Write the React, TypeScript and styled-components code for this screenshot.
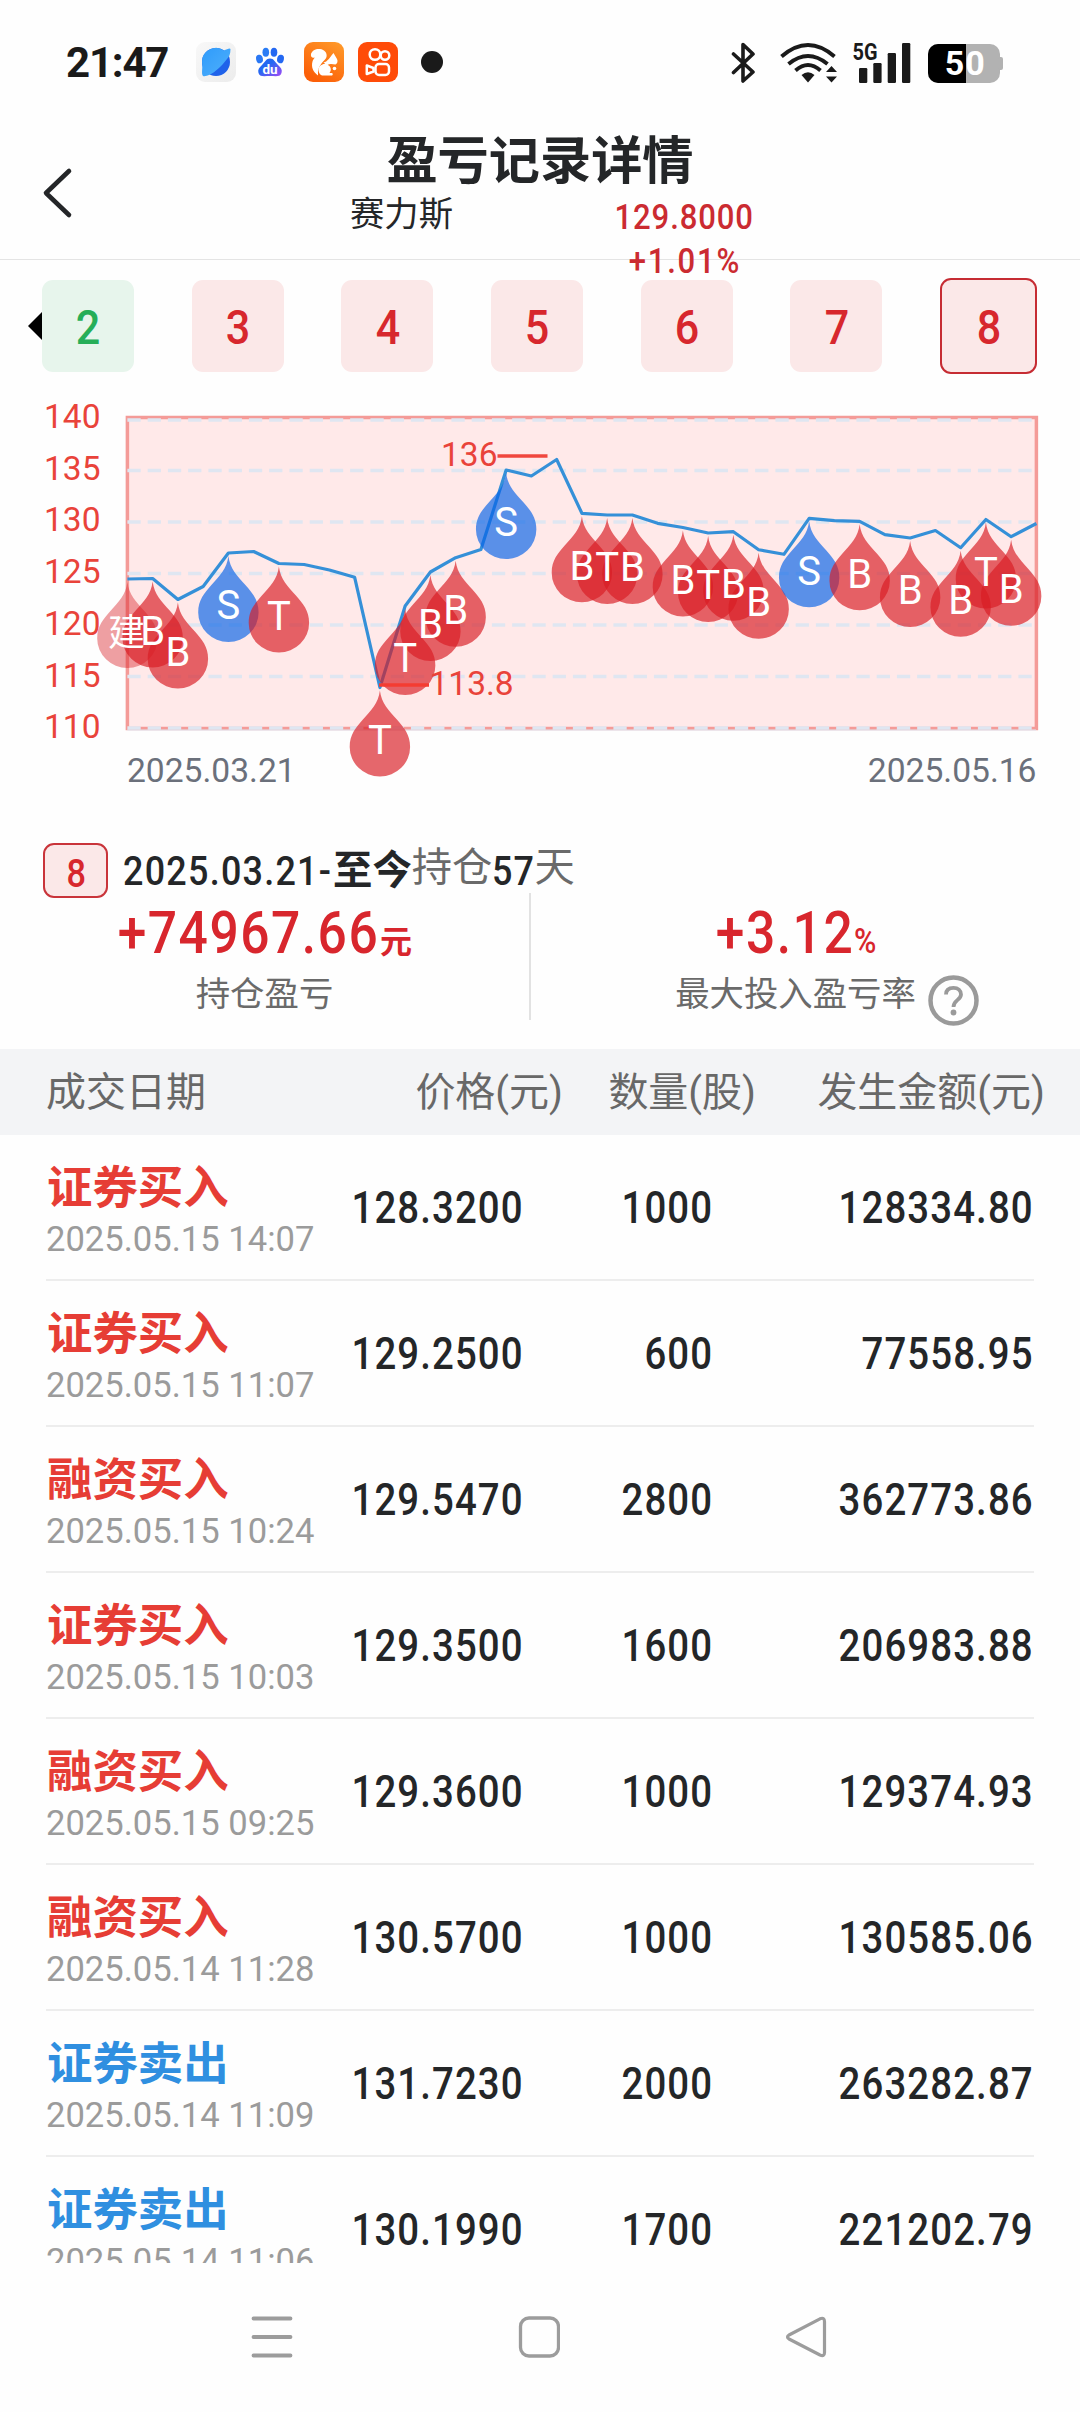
import React from 'react';
import styled, { createGlobalStyle } from 'styled-components';

const SANS = `Roboto, "Noto Sans CJK SC", sans-serif`;

const GlobalStyle = createGlobalStyle`
  * { box-sizing: border-box; }
  body { margin: 0; background: #fefefe; font-family: ${SANS}; color: #242628; }
  svg { display: block; flex: none; }
`;

type Side = 'buy' | 'sell';

const Screen = styled.div`
  width: 1080px;
  height: 2412px;
  display: flex;
  flex-direction: column;
  overflow: hidden;
  background: #fefefe;
`;

/* Narrow DIN-like numerals */
const Num = styled.span<{ $size: number; $lh: number; $origin?: string; $width?: number; $trim?: number; $spacing?: number }>`
  display: inline-block;
  white-space: nowrap;
  width: ${p => (p.$width ? `${p.$width}px` : 'auto')};
  margin-left: -${p => p.$trim ?? 0}px;
  font-size: ${p => p.$size}px;
  line-height: ${p => p.$lh}px;
  font-weight: 500;
  letter-spacing: ${p => p.$spacing ?? 0.029}em;
  transform: scaleX(0.88);
  transform-origin: ${p => p.$origin ?? 'center'} center;
`;

/* ---------- status bar ---------- */

const StatusBar = styled.div`
  height: 100px;
  flex: none;
  display: flex;
  justify-content: space-between;
  padding: 42px 77px 0 66px;
`;

const StatusGroup = styled.div`
  display: flex;
  gap: 14px;
`;

const Clock = styled.div`
  width: 116px;
  font-size: 42px;
  line-height: 42px;
  font-weight: 700;
  letter-spacing: -1.2px;
  color: #1a1a1a;
`;

const MoreDot = styled.div`
  width: 22px;
  height: 22px;
  margin: 9px 0 0 9px;
  border-radius: 50%;
  background: #1a1a1a;
`;

const BrowserIcon = () => (
  <svg width="40" height="40" viewBox="0 0 40 40">
    <defs>
      <linearGradient id="tile" x1="0" y1="0" x2="1" y2="1">
        <stop offset="0" stopColor="#f8f8f8" />
        <stop offset="1" stopColor="#ececec" />
      </linearGradient>
      <linearGradient id="planet" x1="0" y1="0" x2="1" y2="1">
        <stop offset="0" stopColor="#2f9bfb" />
        <stop offset="1" stopColor="#4fb0fb" />
      </linearGradient>
    </defs>
    <rect width="40" height="40" rx="9" fill="url(#tile)" />
    <circle cx="20" cy="20" r="14" fill="#1f62ea" />
    <path d="M7 34C5 32 7 26 6 20A14 14 0 0 1 28 8.500C31 7 34 5.500 34.500 7C34.500 12 33 15 31 17C25 25 19 30 14 32.500C11 34 8.500 34.500 7 34Z" fill="url(#planet)" />
  </svg>
);

const BaiduIcon = () => (
  <svg width="40" height="40" viewBox="0 0 40 40">
    <defs>
      <linearGradient id="paw" x1="0" y1="0" x2="1" y2="1">
        <stop offset="0.4" stopColor="#2468f2" />
        <stop offset="1" stopColor="#a04bf5" />
      </linearGradient>
    </defs>
    <ellipse cx="9.500" cy="17" rx="3.400" ry="4.300" fill="#2a78f4" transform="rotate(-12 9.500 17)" />
    <ellipse cx="15.800" cy="10.300" rx="3.300" ry="4.500" fill="#2a7cf5" />
    <ellipse cx="24" cy="10.300" rx="3.300" ry="4.500" fill="#2468f2" />
    <ellipse cx="30.500" cy="17" rx="3.400" ry="4.300" fill="#2468f2" transform="rotate(12 30.500 17)" />
    <path d="M20 16.500C24 16.500 25 20 28 23C31 25.500 32.500 28 31.500 31C30 35.500 25 34 20 34C15 34 10 35.500 8.500 31C7.500 28 9 25.500 12 23C15 20 16 16.500 20 16.500Z" fill="url(#paw)" />
    <text x="20" y="31.500" textAnchor="middle" fontFamily="Roboto, sans-serif" fontWeight="700" fontSize="13.500" fill="#fff">du</text>
  </svg>
);

const SquirrelIcon = () => (
  <svg width="40" height="40" viewBox="0 0 40 40">
    <defs>
      <linearGradient id="uc" x1="1" y1="0" x2="0.400" y2="1">
        <stop offset="0" stopColor="#ff9c2b" />
        <stop offset="1" stopColor="#fb5f08" />
      </linearGradient>
    </defs>
    <rect width="40" height="40" rx="9" fill="url(#uc)" />
    <path d="M14 33.500C9 30 7 25 8.500 19.500C9 17.500 10 16.500 11 15.500C8 16.500 6.500 14.500 7 12C8 8.500 12 6.500 16 7C20.500 7.500 23.500 11 22.500 15C21.500 19 13 22 14 33.500Z" fill="#fff" />
    <path d="M29.500 11L33 17C34 19 33.500 21.500 31.500 22.500L27 22C24 22 23 23.500 23 23.500L19.500 20.500C24 19.500 26 15 29.500 11Z" fill="#fff" />
    <path d="M14.500 27.500C15 23.500 19 21 23 22.500C27 24 28 28 25.500 31H28C29 31 29 33.500 28 33.500H18C16 33 14.500 30.500 14.500 27.500Z" fill="#fff" />
    <circle cx="30.500" cy="26.500" r="1.800" fill="#fff" />
  </svg>
);

const CameraIcon = () => (
  <svg width="40" height="40" viewBox="0 0 40 40">
    <rect width="40" height="40" rx="9" fill="#ff4b08" />
    <g fill="none" stroke="#fff" strokeWidth="2.500">
      <circle cx="17" cy="12.500" r="5.300" />
      <circle cx="27" cy="13.500" r="4.300" />
      <rect x="17.500" y="22" width="13.500" height="11" rx="3.500" />
      <path d="M8.800 23.500V32L15.500 29.500V26Z" strokeLinejoin="round" />
    </g>
  </svg>
);

const SystemIconsSvg = styled.svg`
  margin-top: -8px;
`;

const SystemIcons = () => (
  <SystemIconsSvg width="272" height="50" viewBox="731 33 272 50">
    <path d="M733.500 53L753 71L743 80V43.500L753 53L733.500 71.500" fill="none" stroke="#1a1a1a" strokeWidth="3.600" strokeLinejoin="round" strokeLinecap="round" />
    <g fill="none" stroke="#1a1a1a" strokeWidth="3.900">
      <path d="M781.500 55.500Q808 32.500 834.500 55.500" />
      <path d="M788.500 63Q808 47 827.500 63" />
      <path d="M795.500 69.500Q808 58.500 820.500 69.500" />
    </g>
    <path d="M801.500 74Q808 68.500 814.500 74L808 81.500Z" fill="#1a1a1a" />
    <path d="M826 71L831.500 65L837 71ZM826 75.500H837L831.500 81.500Z" fill="#1a1a1a" />
    <text transform="translate(852.500 58.500) scale(.83 1)" fontFamily="Roboto, sans-serif" fontWeight="700" fontSize="24" fill="#1a1a1a">5G</text>
    <g fill="#1a1a1a">
      <rect x="859" y="67" width="8.300" height="15" rx="1.200" />
      <rect x="873.300" y="62" width="8.300" height="20" rx="1.200" />
      <rect x="887.700" y="52" width="8.300" height="30" rx="1.200" />
      <rect x="902" y="42" width="8.300" height="40" rx="1.200" />
    </g>
    <rect x="928" y="43" width="72" height="39" rx="10" fill="#b2b2b2" />
    <rect x="998" y="56" width="5" height="13" rx="2" fill="#b2b2b2" />
    <path d="M966 43V82H938A10 10 0 0 1 928 72V53A10 10 0 0 1 938 43Z" fill="#000" />
    <text x="965.300" y="74.300" textAnchor="middle" fontFamily="Roboto, sans-serif" fontWeight="700" fontSize="34" letterSpacing="1" fill="#fff">50</text>
  </SystemIconsSvg>
);

/* ---------- header ---------- */

const Header = styled.header`
  height: 160px;
  flex: none;
  display: flex;
  border-bottom: 1px solid #e4e4e4;
`;

const Back = styled.div`
  width: 100px;
  padding: 67px 0 0 41px;
`;

const Heading = styled.div`
  flex: 1;
  padding: 32px 100px 0 0;
  display: flex;
  flex-direction: column;
  align-items: center;
`;

const Title = styled.h1`
  margin: 0;
  font-size: 51.200px;
  line-height: 60px;
  font-weight: 700;
`;

const SubRow = styled.div`
  display: grid;
  grid-template-columns: 283px 283px;
  margin-left: 6px;
  height: 60px;
  justify-items: center;
`;

const StockName = styled.div`
  font-size: 34.300px;
  line-height: 44px;
`;

const Quote = styled.div`
  margin-top: 3px;
  display: flex;
  flex-direction: column;
  align-items: center;
  color: #cb2b31;
`;

/* ---------- tabs ---------- */

const TabBar = styled.div`
  height: 114px;
  flex: none;
  display: flex;
  align-items: center;
  padding: 18px 43px 0 28px;
`;

const ScrollArrow = styled.div`
  width: 0;
  height: 0;
  border: 14px solid transparent;
  border-left: 0;
  border-right-color: #000;
`;

const Tabs = styled.div`
  flex: 1;
  display: flex;
  align-items: center;
  justify-content: space-between;
`;

const Tab = styled.div<{ $gain: boolean; $active: boolean }>`
  width: ${p => (p.$active ? 97 : 92)}px;
  height: ${p => (p.$active ? 96 : 92)}px;
  border-radius: 11px;
  border: ${p => (p.$active ? '2px solid #c62c33' : '0')};
  background: ${p => (p.$gain ? '#fbe8e8' : '#e7f5ec')};
  color: ${p => (p.$gain ? '#d7272d' : '#26ae58')};
  display: flex;
  align-items: center;
  justify-content: center;
  padding: 4px 0 0 2px;
`;

/* ---------- chart ---------- */

const LEFT = 127.4;
const STEP = 25.25;
const TOP = 419;
const PX_PER_UNIT = 10.3;

const linePoints = [
  579, 578.5, 599.5, 586.5, 553, 551.5, 563.5, 564.5, 570, 577.3, 687.5, 606, 572, 557.7, 549.5, 470, 476, 459.5, 513.3,
  515, 515, 523.3, 527.5, 533, 531.7, 549.7, 554.3, 518.3, 520.7, 521.3, 534.7, 538, 530.5, 547.7, 519.5, 536.7, 523.5,
];

const markers: [number, string][] = [
  [0, '建'], [1, 'B'], [2, 'B'], [4, 'S'], [6, 'T'], [10, 'T'], [11, 'T'], [12, 'B'], [13, 'B'], [15, 'S'], [18, 'B'], [19, 'T'],
  [20, 'B'], [22, 'B'], [23, 'T'], [24, 'B'], [25, 'B'], [27, 'S'], [29, 'B'], [31, 'B'], [33, 'B'], [34, 'T'], [35, 'B'],
];

const markerFill = (label: string) =>
  label === 'S' ? 'rgba(9,100,231,.67)' : label === '建' ? 'rgba(216,28,36,.42)' : 'rgba(216,28,36,.67)';

const xAt = (i: number) => LEFT + i * STEP;

const DROP = 'M0 0C1.500 13 9 20 17 29C24 37 30.200 44 30.200 56.500A30.200 29.500 0 0 1 -30.200 56.500C-30.200 44 -24 37 -17 29C-9 20 -1.500 13 0 0Z';

const Chart = () => (
  <svg width="1080" height="446" viewBox="0 374 1080 446" fontFamily={SANS} fontSize="33.500">
    <rect x={LEFT} y="417.500" width="909" height="311" fill="#ffe9e9" stroke="#f49b98" strokeWidth="3.500" />
    {[140, 135, 130, 125, 120, 115, 110].map((v, i) => {
      const y = TOP + i * 5 * PX_PER_UNIT + (i === 0 ? 1 : 0);
      return (
        <g key={v}>
          <line x1={LEFT} x2="1034" y1={y} y2={y} stroke="#dfe6f1" strokeWidth="3.300" strokeDasharray="13.300 6.950" />
          <text x="100.500" y={428 + i * 51.7} textAnchor="end" fill="#e9433a">{v}</text>
        </g>
      );
    })}
    <line x1={LEFT} x2="1036" y1="730" y2="730" stroke="#dfe6f1" strokeWidth="1" />
    <polyline points={linePoints.map((y, i) => `${xAt(i)},${y}`).join(' ')} fill="none" stroke="#3590d8" strokeWidth="3.200" strokeLinejoin="round" />
    {markers.map(([i, label]) => (
      <path key={i} d={DROP} transform={`translate(${xAt(i)} ${linePoints[i] + 3})`} fill={markerFill(label)} />
    ))}
    <path d="M379 685H429" stroke="#f43c32" strokeWidth="3.300" />
    <path d="M497.500 456H547.500" stroke="#f0473e" strokeWidth="3.500" />
    <text x="497.500" y="466" textAnchor="end" fill="#e9433a">136</text>
    <text x="429.500" y="694.500" fill="#e9433a">113.8</text>
    {markers.map(([i, label]) => (
      <text key={i} x={xAt(i) - (label === '建' ? 1 : 0)} y={linePoints[i] + (label === '建' ? 67 : 66.2)} textAnchor="middle" fontSize={label === '建' ? 37 : 40} fill="#fff">
        {label}
      </text>
    ))}
    <g fill="#6b707b" fontSize="33.600">
      <text x="127" y="782">2025.03.21</text>
      <text x="1036.500" y="782" textAnchor="end">2025.05.16</text>
    </g>
  </svg>
);

/* ---------- holding summary ---------- */

const Period = styled.div`
  height: 73px;
  flex: none;
  display: flex;
  align-items: flex-start;
  padding: 23px 0 0 43px;
`;

const PeriodBadge = styled.div`
  width: 65px;
  height: 55px;
  margin-right: 15px;
  border: 2px solid #c9343a;
  border-radius: 11px;
  background: #fbe8e8;
  color: #d7272d;
  display: flex;
  justify-content: center;
  padding: 2px 0 0 2px;
`;

const PeriodWord = styled.span<{ $strong?: boolean }>`
  font-size: ${p => (p.$strong ? 39.4 : 40.3)}px;
  line-height: 60px;
  font-weight: ${p => (p.$strong ? 700 : 400)};
  color: ${p => (p.$strong ? '#242628' : '#6a6a6a')};
  margin-top: ${p => (p.$strong ? -2 : -5)}px;
`;

const PeriodNum = styled.span`
  margin-top: -2px;
`;

const Stats = styled.div`
  height: 156px;
  flex: none;
  display: flex;
  padding-right: 20px;
`;

const Stat = styled.div`
  flex: 1;
  display: flex;
  flex-direction: column;
  align-items: center;
  padding-top: 8px;
`;

const Divider = styled.div`
  width: 2px;
  height: 127px;
  background: #e2e2e2;
`;

const StatValue = styled.div`
  display: flex;
  align-items: baseline;
  height: 64px;
  color: #d8262d;
`;

const Unit = styled.span`
  font-size: 32px;
  font-weight: 700;
  line-height: 64px;
  margin-left: 1px;
`;

const StatLabel = styled.div`
  display: flex;
  align-items: flex-start;
  margin-top: 7px;
  font-size: 34.400px;
  line-height: 44px;
  color: #6a6a6a;
`;

const Help = styled.span`
  margin: 3px -63px 0 12px;
`;

/* ---------- trades table ---------- */

const TableHead = styled.div`
  height: 86px;
  flex: none;
  display: grid;
  grid-template-columns: 517px 193px 289px;
  padding: 1px 0 0 46px;
  background: #f3f4f6;
  font-size: 40px;
  line-height: 86px;
  color: #686868;
`;

const HeadCell = styled.div`
  display: flex;
  justify-content: space-between;
  &:not(:first-child) { justify-content: flex-end; }
`;

const TradeList = styled.div`
  flex: 1;
  min-height: 0;
  overflow: hidden;
  padding: 0 46px;
`;

const TradeRow = styled.div`
  height: 146px;
  display: grid;
  grid-template-columns: 269px 209px 189px 1fr;
  border-bottom: 2px solid #ededed;
`;

const TradeInfo = styled.div`
  padding-top: 27px;
  white-space: nowrap;
`;

const TradeType = styled.div<{ $side: Side }>`
  padding-left: 1px;
  font-size: 45.400px;
  line-height: 54px;
  font-weight: 700;
  color: ${p => (p.$side === 'buy' ? '#e63d35' : '#2f8fe0')};
`;

const TradeTime = styled.div`
  margin-top: 1px;
  font-size: 34.600px;
  line-height: 44px;
  color: #9b9b9b;
`;

const TradeCell = styled.div`
  padding-top: 44px;
  text-align: right;
`;

const trades: { type: string; side: Side; time: string; price: string; qty: string; amount: string }[] = [
  { type: '证券买入', side: 'buy', time: '2025.05.15 14:07', price: '128.3200', qty: '1000', amount: '128334.80' },
  { type: '证券买入', side: 'buy', time: '2025.05.15 11:07', price: '129.2500', qty: '600', amount: '77558.95' },
  { type: '融资买入', side: 'buy', time: '2025.05.15 10:24', price: '129.5470', qty: '2800', amount: '362773.86' },
  { type: '证券买入', side: 'buy', time: '2025.05.15 10:03', price: '129.3500', qty: '1600', amount: '206983.88' },
  { type: '融资买入', side: 'buy', time: '2025.05.15 09:25', price: '129.3600', qty: '1000', amount: '129374.93' },
  { type: '融资买入', side: 'buy', time: '2025.05.14 11:28', price: '130.5700', qty: '1000', amount: '130585.06' },
  { type: '证券卖出', side: 'sell', time: '2025.05.14 11:09', price: '131.7230', qty: '2000', amount: '263282.87' },
  { type: '证券卖出', side: 'sell', time: '2025.05.14 11:06', price: '130.1990', qty: '1700', amount: '221202.79' },
];

/* ---------- system navigation ---------- */

const NavBar = styled.nav`
  height: 149px;
  flex: none;
  display: grid;
  grid-template-columns: repeat(3, 267px);
  justify-content: center;
  place-items: center;
  padding: 0 3px 1px 0;
`;

export default function App() {
  return (
    <>
      <GlobalStyle />
      <Screen>
        <StatusBar>
          <StatusGroup>
            <Clock>21:47</Clock>
            <BrowserIcon />
            <BaiduIcon />
            <SquirrelIcon />
            <CameraIcon />
            <MoreDot />
          </StatusGroup>
          <SystemIcons />
        </StatusBar>

        <Header>
          <Back>
            <svg width="32" height="52" viewBox="0 0 32 52">
              <path d="M28 4L5 26L28 48" fill="none" stroke="#242628" strokeWidth="4.600" strokeLinecap="round" strokeLinejoin="round" />
            </svg>
          </Back>
          <Heading>
            <Title>盈亏记录详情</Title>
            <SubRow>
              <StockName>赛力斯</StockName>
              <Quote>
                <Num $size={35.3} $lh={44}>129.8000</Num>
                <Num $size={35.3} $lh={44} $spacing={0.058}>+1.01%</Num>
              </Quote>
            </SubRow>
          </Heading>
        </Header>

        <TabBar>
          <ScrollArrow />
          <Tabs>
            {[2, 3, 4, 5, 6, 7, 8].map(n => (
              <Tab key={n} $gain={n !== 2} $active={n === 8}>
                <Num $size={49} $lh={60}>{n}</Num>
              </Tab>
            ))}
          </Tabs>
        </TabBar>

        <Chart />

        <Period>
          <PeriodBadge>
            <Num $size={39} $lh={54}>8</Num>
          </PeriodBadge>
          <PeriodNum>
            <Num $size={40.8} $lh={60} $origin="left" $width={210} $spacing={0.035}>2025.03.21-</Num>
          </PeriodNum>
          <PeriodWord $strong>至今</PeriodWord>
          <PeriodWord>持仓</PeriodWord>
          <PeriodNum>
            <Num $size={40.8} $lh={60} $origin="left" $width={42}>57</Num>
          </PeriodNum>
          <PeriodWord>天</PeriodWord>
        </Period>

        <Stats>
          <Stat>
            <StatValue>
              <Num $size={58.6} $lh={64} $origin="right" $trim={35}>+74967.66</Num>
              <Unit>元</Unit>
            </StatValue>
            <StatLabel>持仓盈亏</StatLabel>
          </Stat>
          <Divider />
          <Stat>
            <StatValue>
              <Num $size={58.6} $lh={64} $origin="right" $trim={14}>+3.12</Num>
              <Num $size={34.5} $lh={64} $origin="left">%</Num>
            </StatValue>
            <StatLabel>
              最大投入盈亏率
              <Help>
                <svg width="51" height="51" viewBox="0 0 51 51" fill="none" stroke="#9a9a9a">
                  <circle cx="25.500" cy="25.500" r="23" strokeWidth="4.500" />
                  <path d="M18 19.500C18 15 21 12.800 25.500 12.800C30 12.800 33 15.500 33 19.500C33 25 25.500 25 25.500 32" strokeWidth="3.800" />
                  <circle cx="25.500" cy="37.500" r="2.900" fill="#9a9a9a" stroke="none" />
                </svg>
              </Help>
            </StatLabel>
          </Stat>
        </Stats>

        <TableHead>
          <HeadCell>
            <span>成交日期</span>
            <span>价格(元)</span>
          </HeadCell>
          <HeadCell>数量(股)</HeadCell>
          <HeadCell>发生金额(元)</HeadCell>
        </TableHead>

        <TradeList>
          {trades.map(t => (
            <TradeRow key={t.time}>
              <TradeInfo>
                <TradeType $side={t.side}>{t.type}</TradeType>
                <TradeTime>{t.time}</TradeTime>
              </TradeInfo>
              {[t.price, t.qty, t.amount].map((value, i) => (
                <TradeCell key={i}>
                  <Num $size={43.6} $lh={60} $origin="right">{value}</Num>
                </TradeCell>
              ))}
            </TradeRow>
          ))}
        </TradeList>

        <NavBar>
          <svg width="42" height="42" viewBox="0 0 42 42" stroke="#9c9c9c" strokeWidth="3.800" strokeLinecap="round">
            <path d="M2.500 2.500H39.500M2.500 21H39.500M2.500 39.500H39.500" />
          </svg>
          <svg width="42" height="42" viewBox="0 0 42 42">
            <rect x="2.500" y="2" width="38" height="38" rx="8.500" fill="none" stroke="#9c9c9c" strokeWidth="3.300" />
          </svg>
          <svg width="42" height="42" viewBox="0 0 42 42">
            <path d="M35 2.800Q39.500 1 39.500 5.500V36.500Q39.500 41 35 39L4 23Q1 21 4 19Z" fill="none" stroke="#9c9c9c" strokeWidth="3.200" strokeLinejoin="round" />
          </svg>
        </NavBar>
      </Screen>
    </>
  );
}
